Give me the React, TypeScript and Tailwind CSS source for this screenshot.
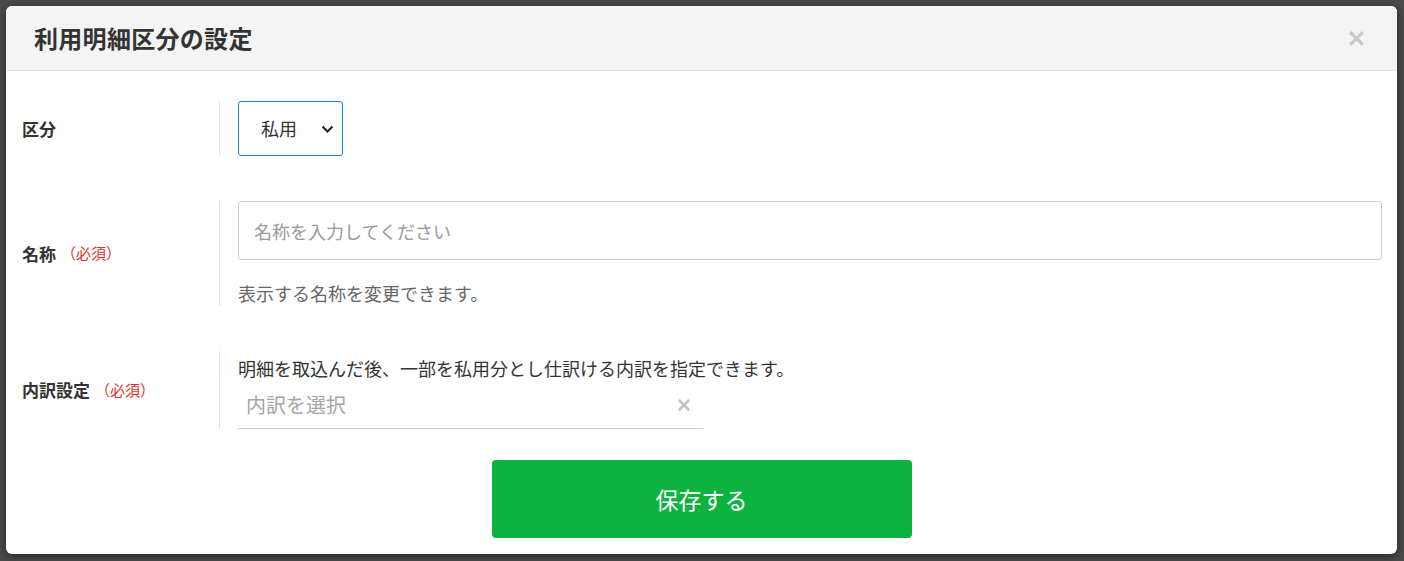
import { useState } from 'react'

function TimesIcon({ className }: { className?: string }) {
  return (
    <svg viewBox="0 0 16 16" className={className} fill="currentColor">
      <path d="M3.2 1 8 5.8 12.8 1 15 3.2 10.2 8 15 12.8 12.8 15 8 10.2 3.2 15 1 12.8 5.8 8 1 3.2Z" />
    </svg>
  )
}

function FieldRow({ label, required, children }: { label: string; required?: boolean; children: React.ReactNode }) {
  return (
    <div className="flex items-stretch">
      <div className="w-[197px] shrink-0 flex items-center">
        <span className="text-[17px] font-bold text-[#333]">{label}</span>
        {required && <span className="ml-[5px] text-[15px] text-[#e0322b]">（必須）</span>}
      </div>
      <div className="flex-1 border-l border-[#e3e3e3] pl-[18px]">{children}</div>
    </div>
  )
}

export default function App() {
  const [kind, setKind] = useState('私用')
  const [name, setName] = useState('')

  return (
    <div
      className="w-[1404px] h-[561px] bg-[#4a4a4a] p-[6px] pb-[7px]"
      style={{ fontFamily: '"Noto Sans CJK JP", "Noto Sans", sans-serif' }}
    >
      <div className="h-[548px] w-[1391px] bg-white rounded-[6px] overflow-hidden shadow-[0_2px_8px_rgba(0,0,0,0.5)] flex flex-col">
        {/* Header */}
        <div className="h-[65px] shrink-0 bg-[#f4f4f4] border-b border-[#e2e2e2] flex items-center justify-between pl-[28px] pr-[32px]">
          <h1 className="text-[24px] font-bold text-[#333] tracking-[0.3px]">利用明細区分の設定</h1>
          <button className="text-[#c9c9c9]">
            <TimesIcon className="w-[17px] h-[17px]" />
          </button>
        </div>

        {/* Body */}
        <div className="flex-1 pt-[30px] pl-[16px] pr-[15px] flex flex-col gap-[45px]">
          <FieldRow label="区分">
            <div className="relative w-[105px] h-[55px] border border-[#1a84ea] rounded-[3px] flex items-center">
              <select
                value={kind}
                onChange={(e) => setKind(e.target.value)}
                className="appearance-none w-full h-full bg-transparent pl-[22px] text-[18px] text-[#333] outline-none"
              >
                <option>私用</option>
                <option>事業用</option>
              </select>
              <svg viewBox="0 0 12 8" className="absolute right-[8px] top-[23px] w-[13px] h-[8px] pointer-events-none" fill="none" stroke="#222" strokeWidth={2}>
                <path d="M1 1.5 6 6.5 11 1.5" />
              </svg>
            </div>
          </FieldRow>

          <FieldRow label="名称" required>
            <input
              value={name}
              onChange={(e) => setName(e.target.value)}
              placeholder="名称を入力してください"
              className="w-full h-[59px] border border-[#cfcfcf] rounded-[3px] px-[15px] text-[18px] text-[#333] placeholder:text-[#9a9a9a] outline-none"
            />
            <p className="mt-[20px] text-[18px] text-[#666] leading-[26px]">表示する名称を変更できます。</p>
          </FieldRow>

          <FieldRow label="内訳設定" required>
            <p className="text-[18px] text-[#333] leading-[26px] mt-[4px]">
              明細を取込んだ後、一部を私用分とし仕訳ける内訳を指定できます。
            </p>
            <div className="w-[465px] h-[48px] border-b border-[#cfcfcf] flex items-center justify-between pl-[8px] pr-[12px]">
              <span className="text-[20px] text-[#a5a5a5]">内訳を選択</span>
              <TimesIcon className="w-[14px] h-[14px] text-[#c3c3c3]" />
            </div>
          </FieldRow>
        </div>

        {/* Footer */}
        <div className="flex justify-center pb-[16px]">
          <button className="w-[420px] h-[78px] bg-[#0db33f] rounded-[4px] text-white text-[23px]">保存する</button>
        </div>
      </div>
    </div>
  )
}
